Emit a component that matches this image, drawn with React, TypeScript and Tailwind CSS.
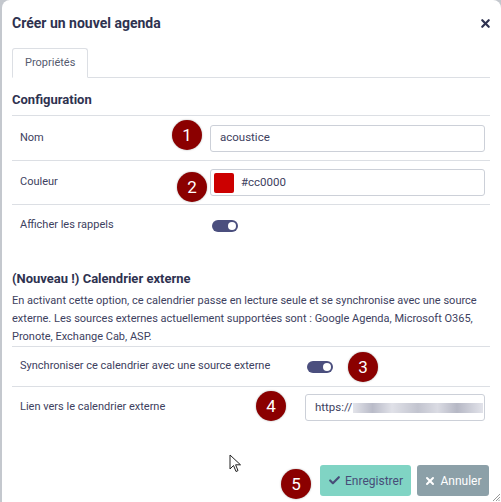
import { Check, X } from 'lucide-react';

function Badge({ n, className }: { n: string; className: string }) {
  return (
    <span
      className={`absolute z-10 w-[30px] h-[30px] rounded-full bg-[#8b0000] text-white text-[17px] leading-none flex items-center justify-center shadow-[0_0_2px_rgba(0,0,0,0.35)] ${className}`}
    >
      {n}
    </span>
  );
}

function Toggle() {
  return (
    <span className="w-[26px] h-[12px] rounded-full bg-[#4b4f7e] flex items-center justify-end pr-[2px]">
      <span className="w-[8px] h-[8px] rounded-full bg-white" />
    </span>
  );
}

export default function App() {
  return (
    <div className="w-[501px] h-[502px] bg-[#c4c8ce] pl-[2px] font-['Roboto',sans-serif] text-[#3d4160]">
      <div className="relative w-full h-full bg-white rounded-tl-[8px] rounded-tr-[8px] flex flex-col">
        {/* Header */}
        <div className="h-[46px] flex items-center justify-between pl-[10px] pr-[9px]">
          <h1 className="text-[14px] font-bold text-[#2e3250]">Créer un nouvel agenda</h1>
          <X size={13} strokeWidth={4} className="text-[#2e3250]" />
        </div>

        {/* Tabs */}
        <div className="mt-[2px] ml-[10px] mr-[11px] border-b border-[#dcdfe4] flex">
          <div className="h-[30px] -mb-px px-[12px] flex items-center bg-white border border-b-white border-[#dcdfe4] rounded-t-[3px] text-[11px] text-[#555a6e]">
            Propriétés
          </div>
        </div>

        <div className="pl-[10px] pr-[11px]">
          <h2 className="mt-[14px] text-[13px] leading-[16px] font-bold text-[#2e3250]">Configuration</h2>

          <div className="mt-[7px] text-[11px]">
            <div className="relative h-[45px] border-t border-[#dcdfe4] grid grid-cols-[190px_1fr] items-center pl-[8px] pr-[5px]">
              <span>Nom</span>
              <div className="h-[27px] border border-[#ccd0d8] rounded-[3px] flex items-center px-[9px] text-[11.5px]">acoustice</div>
              <Badge n="1" className="left-[160px] top-[4px]" />
            </div>
            <div className="relative h-[44px] border-t border-[#dcdfe4] grid grid-cols-[190px_1fr] items-center pl-[8px] pr-[5px]">
              <span>Couleur</span>
              <div className="h-[27px] border border-[#ccd0d8] rounded-[3px] flex items-center pl-[3px] gap-[7px] text-[11.5px]">
                <span className="w-[20px] h-[20px] rounded-[2px] bg-[#cc0000]" />
                #cc0000
              </div>
              <Badge n="2" className="left-[165px] top-[11px]" />
            </div>
            <div className="h-[42px] border-t border-[#dcdfe4] grid grid-cols-[192px_1fr] items-center pl-[8px] pr-[5px]">
              <span>Afficher les rappels</span>
              <Toggle />
            </div>
          </div>

          <h2 className="mt-[25px] text-[13px] leading-[16px] font-bold text-[#2e3250]">(Nouveau !) Calendrier externe</h2>
          <p className="mt-[5px] text-[11px] leading-[18px]">
            En activant cette option, ce calendrier passe en lecture seule et se synchronise avec une source externe. Les sources externes actuellement supportées sont : Google Agenda, Microsoft O365, Pronote, Exchange Cab, ASP.
          </p>

          <div className="text-[11px]">
            <div className="relative h-[40px] border-t border-[#dcdfe4] grid grid-cols-[287px_1fr] items-center pl-[8px] pr-[5px]">
              <span>Synchroniser ce calendrier avec une source externe</span>
              <Toggle />
              <Badge n="3" className="left-[336px] top-[5px]" />
            </div>
            <div className="relative h-[42px] border-t border-[#dcdfe4] grid grid-cols-[285px_1fr] items-center pl-[8px] pr-[5px]">
              <span>Lien vers le calendrier externe</span>
              <div className="h-[27px] border border-[#ccd0d8] rounded-[3px] flex items-center pl-[9px] text-[11.5px] overflow-hidden">
                https://
                <span className="ml-[1px] h-[10px] w-[130px] bg-[linear-gradient(90deg,#e3e4ea,#b9bbc8_15%,#e0e1e8_30%,#c2c4cf_50%,#dadbe3_65%,#b6b8c5_80%,#e2e3ea)] blur-[0.6px]" />
              </div>
              <Badge n="4" className="left-[244px] top-[4px]" />
            </div>
          </div>
        </div>

        {/* Cursor */}
        <svg className="absolute left-[227px] top-[454px]" width="13" height="19" viewBox="0 0 13 19">
          <path d="M1 1 L1 15 L4.5 11.5 L7 17.5 L9 16.6 L6.6 10.8 L11.5 10.8 Z" fill="white" stroke="#222" strokeWidth="1" strokeLinejoin="round" />
        </svg>

        {/* Footer */}
        <div className="mt-auto mb-[6px] mr-[12px] flex justify-end items-center gap-[6px]">
          <div className="relative">
            <Badge n="5" className="-left-[39px] top-[4px]" />
            <button className="h-[31px] w-[91px] rounded-[3px] bg-[#80d4c4] text-[#474c78] text-[12px] flex items-center justify-center gap-[4px]">
              <Check size={13} strokeWidth={4} />
              Enregistrer
            </button>
          </div>
          <button className="h-[31px] w-[72px] rounded-[3px] bg-[#8ca0a8] text-white text-[12px] flex items-center justify-center gap-[4px]">
            <X size={12} strokeWidth={4} />
            Annuler
          </button>
        </div>

        <svg className="absolute right-[1px] bottom-[1px]" width="7" height="7" viewBox="0 0 7 7">
          <path d="M7 0 L0 7 M7 3 L3 7 M7 5.5 L5.5 7" stroke="#999" strokeWidth="1" />
        </svg>
      </div>
    </div>
  );
}
